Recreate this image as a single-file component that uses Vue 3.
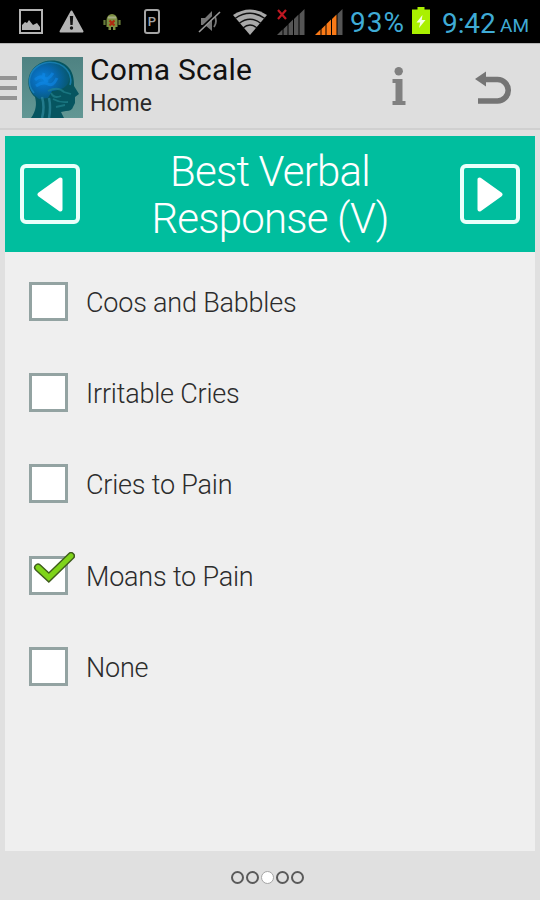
<template>
  <div class="screen">
    <div class="status-bar">
      <svg class="icon-picture" width="24" height="25" viewBox="0 0 24 25">
        <rect x="1" y="1" width="22" height="23" fill="none" stroke="#b4b4b4" stroke-width="2" />
        <path d="M3 21v-5l3-3 2 1 2-3 4 5 4-2 3 4v3z" fill="#b4b4b4" />
      </svg>
      <svg class="icon-warning" width="25" height="23" viewBox="0 0 25 23">
        <path d="M12.500 1.500L23.500 21.500H1.500z" fill="#b4b4b4" stroke="#b4b4b4" stroke-width="2" stroke-linejoin="round" />
        <path d="M10.800 6h3.400l-.6 9h-2.200z" fill="#111" />
        <circle cx="12.500" cy="18" r="1.700" fill="#111" />
      </svg>
      <svg class="icon-android" width="18" height="18" viewBox="0 0 18 18">
        <path d="M3.500 7a5.500 6 0 0 1 11 0v7h-2v3h-2.500v-3H8v3H5.500v-3h-2z" fill="#7c8f42" />
        <path d="M1.500 7v5M16.500 7v5" stroke="#667a38" stroke-width="2.200" />
        <path d="M5 4.500h8" stroke="#a5ab85" stroke-width="2" />
        <path d="M6.500 7.500l5 5M11.500 7.500l-5 5" stroke="#b0290f" stroke-width="2.200" />
      </svg>
      <div class="icon-parking">P</div>
      <svg class="icon-mute" width="24" height="25" viewBox="0 0 24 25">
        <path d="M3 9h4l7-7v20l-7-6H3z" fill="#777" />
        <path d="M16 6q4 6 0 12" fill="none" stroke="#777" stroke-width="1.800" />
        <path d="M1.500 21L21.500 2" stroke="#000" stroke-width="2.500" />
        <path d="M1 23L22 3" stroke="#999" stroke-width="1.600" />
      </svg>
      <svg class="icon-wifi" width="34" height="26" viewBox="0 0 34 26">
        <path d="M0 6Q17-5 34 6L17 26z" fill="#a9a9a9" />
        <path d="M2 9.500Q17-1 32 9.500M6 14.500Q17 6 28 14.500M10 19Q17 13 24 19" fill="none" stroke="#111" stroke-width="1.500" />
      </svg>
      <svg class="icon-signal" width="28" height="26" viewBox="0 0 28 26">
        <path v-for="(bar, i) in bars" :key="i" :d="bar" fill="#555" />
        <path d="M1 1l8 9M9 1l-8 9" stroke="#c01822" stroke-width="2.200" />
      </svg>
      <svg class="icon-signal second" width="28" height="26" viewBox="0 0 28 26">
        <path v-for="(bar, i) in bars" :key="i" :d="bar" :fill="i < 4 ? '#fa7a17' : '#555'" />
      </svg>
      <span class="percent">93%</span>
      <svg class="icon-battery" width="18" height="27" viewBox="0 0 18 27">
        <path d="M5.500 0h7v2.500H18V27H0V2.500h5.500z" fill="#aaf000" />
        <path d="M10.500 8L4.500 15.500h3.700L7 21l6.500-8H9.700z" fill="#f4ffe0" />
      </svg>
      <span class="clock">9:42</span>
      <span class="meridiem">AM</span>
    </div>

    <header class="action-bar">
      <div class="drawer"><i></i><i></i><i></i></div>
      <svg class="app-logo" width="61" height="61" viewBox="0 0 61 61">
        <defs>
          <linearGradient id="logoBg" x1="0" y1="0" x2="0" y2="1">
            <stop offset="0" stop-color="#4e8282" />
            <stop offset="1" stop-color="#629794" />
          </linearGradient>
          <radialGradient id="skull" cx=".35" cy=".45" r=".7">
            <stop offset="0" stop-color="#0a80da" />
            <stop offset=".45" stop-color="#0868b0" />
            <stop offset=".8" stop-color="#075c80" />
            <stop offset="1" stop-color="#075768" />
          </radialGradient>
        </defs>
        <rect width="61" height="61" fill="url(#logoBg)" />
        <path d="M9 61C14 54 15 47 13 40C4 32 4 17 14 9C24 1 40 2 47 11C52 17 52 25 52 29L57 37L53 40L53 46L51 50Q50 54 44 54L39 55L42 61z" fill="#065560" />
        <path d="M12 38C4 29 6 15 15 9C25 2 39 5 45 14C50 23 46 31 36 33L30 34L26 41L17 42z" fill="url(#skull)" />
        <path d="M12 36C4 27 7 15 16 9C26 2 41 5 47 16Q50 23 48 28" fill="none" stroke="#208cc4" stroke-width="1.600" opacity=".7" />
        <path d="M13 23q5-5 9-2t9-5M14 29q7-5 12-2t9-6M22 16q-2 6 4 9" fill="none" stroke="#0f8ef0" stroke-width="3" opacity=".5" />
        <path d="M26 34q10-5 16 1l7 2M31 42q7 4 15 3M29 36q3 6 10 3M34 50l9-2" fill="none" stroke="#238590" stroke-width="1.800" opacity=".65" />
        <path d="M20 40Q23 50 20 61M27 41Q29 50 27 61" fill="none" stroke="#328fa3" stroke-width="2.500" opacity=".65" />
      </svg>
      <div class="titles">
        <div class="app-title">Coma Scale</div>
        <div class="app-subtitle">Home</div>
      </div>
      <svg class="icon-info" width="14" height="39" viewBox="0 0 14 39">
        <circle cx="6.700" cy="4.200" r="4.200" fill="#808080" />
        <path d="M.5 12H10.500V34H13.500V38H.5V34H3.500V16H.5z" fill="#808080" />
      </svg>
      <svg class="icon-back" width="37" height="34" viewBox="0 0 37 34">
        <path d="M9 8.500H22.500a10.500 10.500 0 0 1 0 21.500H3" fill="none" stroke="#757575" stroke-width="5.600" />
        <path d="M0 8L11 .5V15.500z" fill="#757575" />
      </svg>
    </header>

    <main class="card">
      <div class="banner">
        <button class="nav-btn">
          <svg width="26" height="35" viewBox="0 0 26 35">
            <path d="M23.500 2.500V32.500L2.500 17.500z" fill="#fff" stroke="#fff" stroke-width="4" stroke-linejoin="round" />
          </svg>
        </button>
        <h1>Best Verbal<br />Response (V)</h1>
        <button class="nav-btn">
          <svg width="26" height="35" viewBox="0 0 26 35">
            <path d="M2.500 2.500V32.500L23.500 17.500z" fill="#fff" stroke="#fff" stroke-width="4" stroke-linejoin="round" />
          </svg>
        </button>
      </div>

      <ul class="options">
        <li v-for="(option, i) in options" :key="option" @click="selected = i">
          <span class="checkbox">
            <svg v-if="selected === i" class="tick" width="42" height="32" viewBox="0 0 42 32">
              <path d="M5 15.500L15.800 25.500L38 4" fill="none" stroke="#3f5d1c" stroke-width="8" stroke-linecap="round" />
              <path d="M5 15.500L15.800 25.500L38 4" fill="none" stroke="#7fd41a" stroke-width="5.200" stroke-linecap="round" />
            </svg>
          </span>
          <span class="label">{{ option }}</span>
        </li>
      </ul>
    </main>

    <footer class="pager">
      <i v-for="n in 5" :key="n" :class="{ active: n === page }"></i>
    </footer>
  </div>
</template>

<script setup>
import { ref } from 'vue'

const options = [
  'Coos and Babbles',
  'Irritable Cries',
  'Cries to Pain',
  'Moans to Pain',
  'None'
]

const selected = ref(3)
const page = ref(3)

// signal strength bars, left to right
const bars = [
  'M0 26L5.500 20.500V26z',
  'M6.500 20L10.500 16V26H6.500z',
  'M11.500 15L16 10.500V26H11.500z',
  'M17 10L21.500 5.500V26H17z',
  'M22.500 5L27.500 0V26H22.500z'
]
</script>

<style>
body {
  margin: 0;
  background: #e0e0e0;
}
</style>

<style scoped>
.screen {
  display: flex;
  flex-direction: column;
  width: 540px;
  height: 900px;
  overflow: hidden;
  background: #e0e0e0;
  font-family: Roboto, "Liberation Sans", sans-serif;
}

svg {
  display: block;
  flex-shrink: 0;
}

.status-bar {
  display: flex;
  align-items: center;
  box-sizing: border-box;
  height: 43px;
  flex-shrink: 0;
  padding-left: 19px;
  background: #000;
  color: #3fabd5;
  white-space: nowrap;
}

.icon-warning {
  margin-left: 16px;
}

.icon-android {
  margin-left: 19px;
}

.icon-parking {
  box-sizing: border-box;
  width: 16px;
  height: 25px;
  margin-left: 23px;
  border: 2px solid #a5a5a5;
  border-radius: 3px;
  color: #a5a5a5;
  font-size: 13px;
  font-weight: 500;
  line-height: 21px;
  text-align: center;
}

.icon-mute {
  margin-left: 38px;
}

.icon-wifi {
  margin-left: 11px;
}

.icon-signal {
  margin-left: 10px;
}

.percent {
  width: 62px;
  margin-left: 7px;
  padding-top: 3px;
  font-size: 28px;
  line-height: 40px;
  letter-spacing: 1px;
}

.icon-battery {
  margin-bottom: 2px;
}

.clock {
  width: 58px;
  margin-left: 12px;
  padding-top: 3px;
  font-size: 28px;
  letter-spacing: -0.1px;
}

.meridiem {
  padding-top: 8px;
  font-size: 19px;
}

.action-bar {
  display: flex;
  align-items: flex-start;
  box-sizing: border-box;
  height: 87px;
  flex-shrink: 0;
  padding-top: 14px;
  background: #dedede;
  border-top: 1px solid #b5b5b5;
  border-bottom: 2px solid #d0d0d0;
}

.drawer {
  display: flex;
  flex-direction: column;
  gap: 6px;
  width: 22px;
  padding-top: 18px;
}

.drawer i {
  width: 17px;
  height: 4px;
  background: #949494;
}

.app-logo {
  margin-top: -1px;
}

.titles {
  width: 309px;
  padding-left: 7px;
  box-sizing: border-box;
  color: #111;
}

.app-title {
  margin-top: -6px;
  font-size: 30px;
  line-height: 36px;
  letter-spacing: 0.25px;
}

.app-subtitle {
  margin-top: 1px;
  font-size: 23px;
  line-height: 29px;
  color: #2a2a2a;
}

.icon-info {
  margin-top: 9px;
}

.icon-back {
  margin: 13px 0 0 69px;
}

.card {
  width: 530px;
  height: 715px;
  flex-shrink: 0;
  margin: 6px auto 0;
  background: #efefef;
}

.banner {
  display: flex;
  align-items: center;
  justify-content: space-between;
  box-sizing: border-box;
  height: 116px;
  padding: 0 15px;
  background: #00be9e;
}

.banner h1 {
  margin: 0;
  padding-top: 2px;
  color: #fff;
  font-size: 42px;
  font-weight: 300;
  line-height: 47px;
  letter-spacing: -0.8px;
  text-align: center;
}

.nav-btn {
  display: flex;
  align-items: center;
  justify-content: center;
  box-sizing: border-box;
  width: 60px;
  height: 60px;
  padding: 0;
  border: 4px solid #e9fffa;
  border-radius: 6px;
  background: transparent;
}

.options {
  margin: 0;
  padding: 4px 0 0 24px;
  list-style: none;
}

.options li {
  display: flex;
  align-items: center;
  height: 91.200px;
}

.checkbox {
  position: relative;
  box-sizing: border-box;
  width: 39px;
  height: 39px;
  border: 3px solid #93a3a2;
  background: #fff;
}

.tick {
  position: absolute;
  left: 1px;
  top: -7px;
}

.label {
  margin-left: 18px;
  padding-top: 3px;
  color: #2c2c2c;
  font-size: 27px;
  font-weight: 300;
  letter-spacing: -0.2px;
}

.pager {
  display: flex;
  align-items: center;
  justify-content: center;
  gap: 2px;
  flex: 1;
  padding: 4px 5px 0 0;
}

.pager i {
  box-sizing: border-box;
  width: 13px;
  height: 13px;
  border: 2px solid #5a5a5a;
  border-radius: 50%;
}

.pager i.active {
  border: 1px solid #a5a5a5;
  background: #fff;
}
</style>
